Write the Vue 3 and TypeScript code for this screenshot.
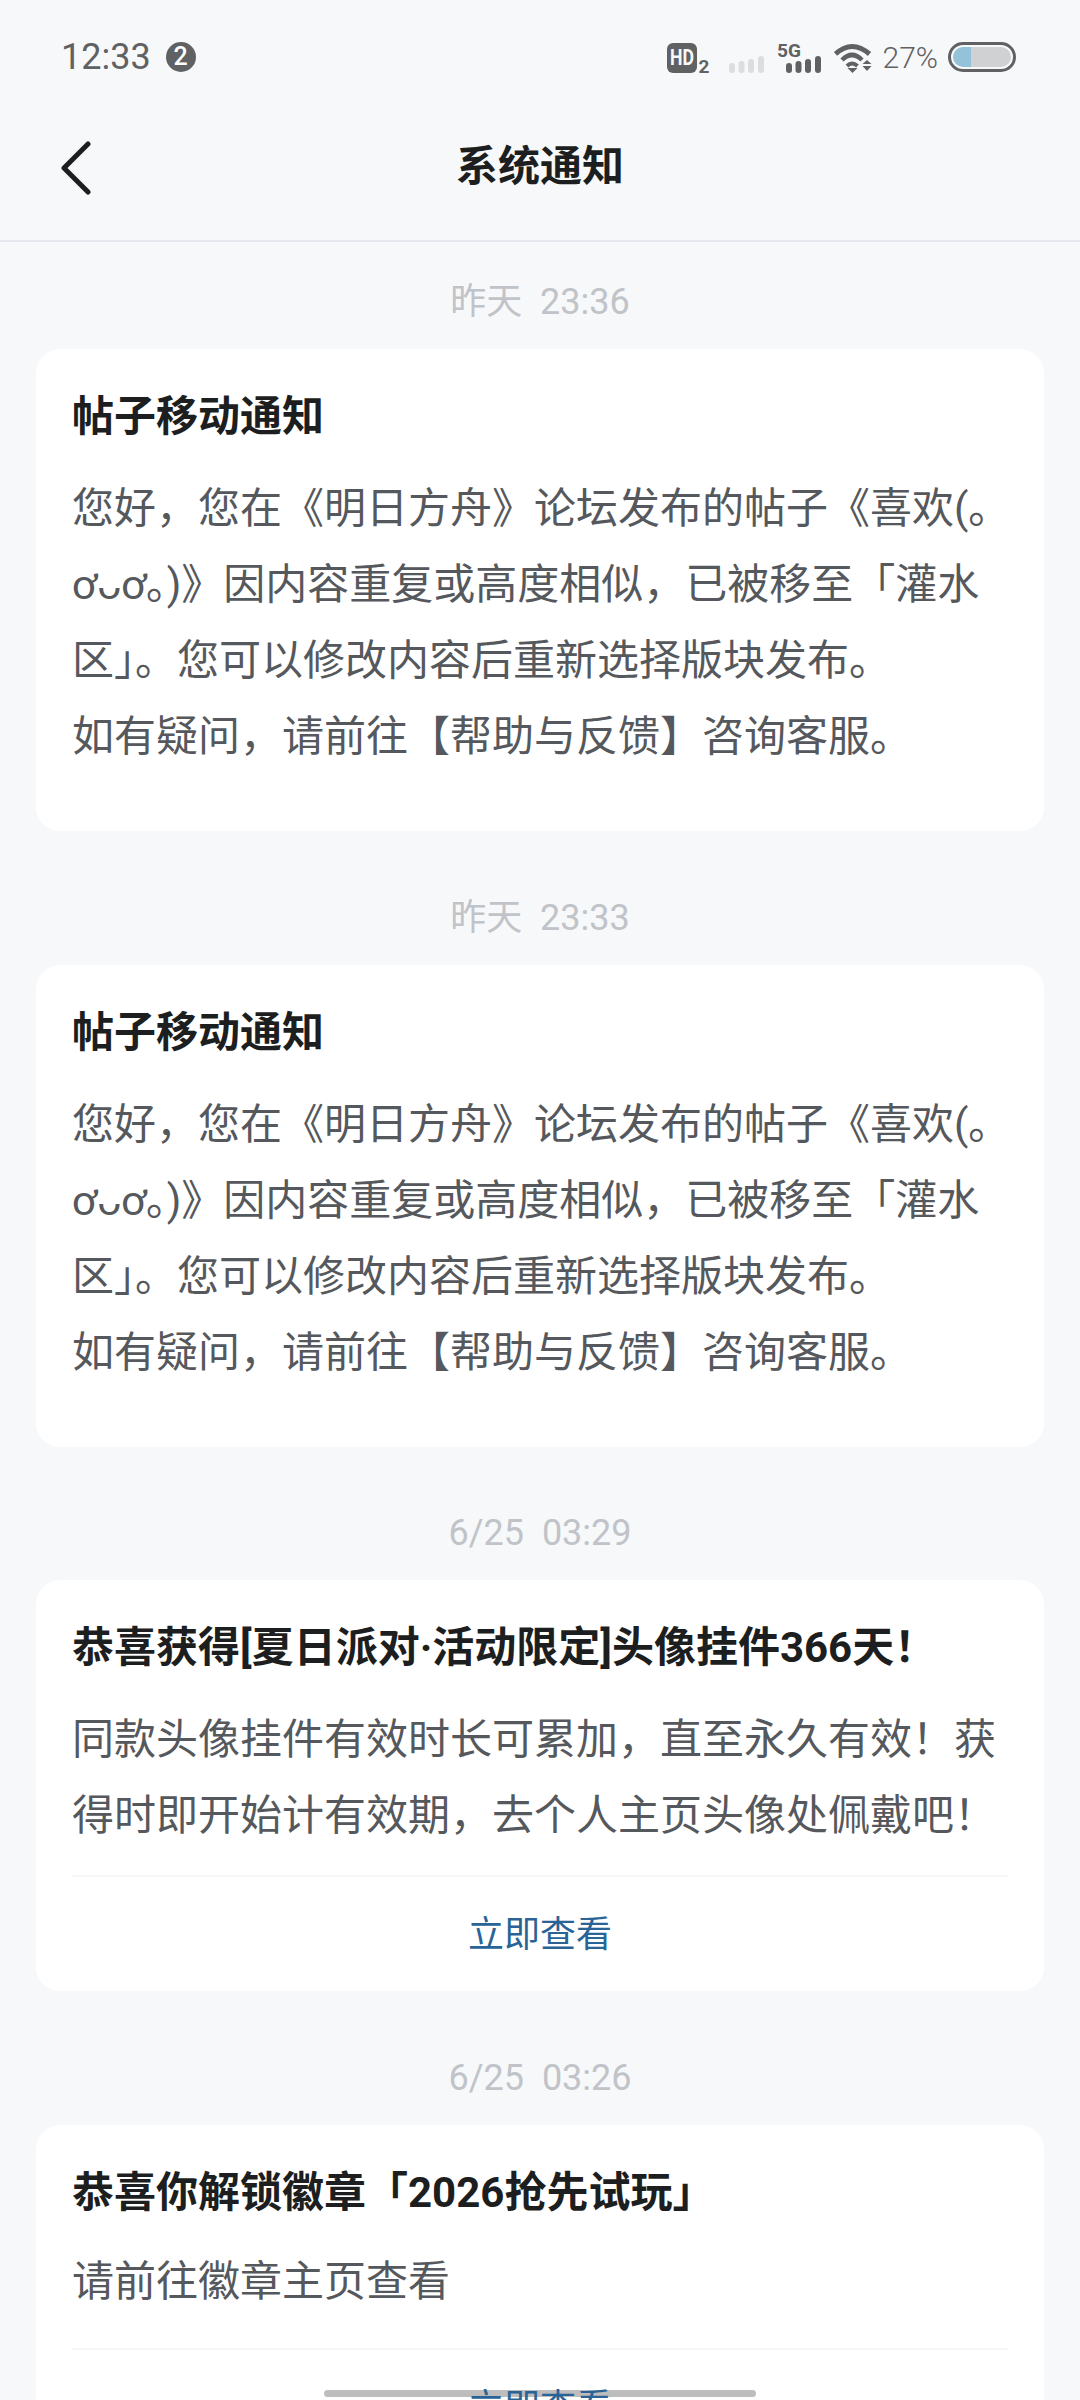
<template>
  <div class="page">
    <div class="status-bar">
      <div class="status-left">
        <span class="clock">12:33</span>
        <span class="badge">2</span>
      </div>
      <div class="status-right">
        <svg class="hd" width="42" height="44" viewBox="0 0 42 44">
          <rect x="0" y="8" width="30" height="30" rx="6" fill="#5f6163" />
          <text x="15" y="30" text-anchor="middle" textLength="24" lengthAdjust="spacingAndGlyphs" class="hd-text">HD</text>
          <text x="37" y="38" text-anchor="middle" class="hd-sub">2</text>
        </svg>
        <svg class="bars" width="35" height="44" viewBox="0 0 35 44">
          <rect x="0" y="28" width="6" height="10" rx="3" fill="#dcdddf" />
          <rect x="9.500" y="26" width="6" height="12" rx="3" fill="#dcdddf" />
          <rect x="19" y="24" width="6" height="14" rx="3" fill="#dcdddf" />
          <rect x="29" y="21" width="6" height="17" rx="3" fill="#dcdddf" />
        </svg>
        <svg class="net" width="44" height="44" viewBox="0 0 44 44">
          <text x="0" y="22" textLength="24" lengthAdjust="spacingAndGlyphs" class="net-text">5G</text>
          <rect x="9" y="28" width="6" height="10" rx="3" fill="#5f6163" />
          <rect x="18.500" y="26" width="6" height="12" rx="3" fill="#5f6163" />
          <rect x="28" y="24" width="6" height="14" rx="3" fill="#5f6163" />
          <rect x="38" y="21" width="6" height="17" rx="3" fill="#5f6163" />
        </svg>
        <svg class="wifi" width="38" height="44" viewBox="0 0 38 44">
          <path d="M1.500 19 Q18 4 35.500 19" fill="none" stroke="#5f6163" stroke-width="5" />
          <path d="M8 25 Q18 15 28 25" fill="none" stroke="#5f6163" stroke-width="4.500" />
          <path d="M13 31 Q18 26 23.500 31" fill="none" stroke="#5f6163" stroke-width="4" />
          <path d="M13.500 33 H23.500 L18.500 38 Z" fill="#5f6163" />
          <path d="M28.500 29 L33 25 L37.500 29 Z" fill="#5f6163" />
          <path d="M28.500 31 H37.500 L33 36 Z" fill="#5f6163" />
        </svg>
        <span class="level">27%</span>
        <div class="battery">
          <div class="battery-fill"></div>
        </div>
      </div>
    </div>

    <div class="nav-bar">
      <svg class="back" width="30" height="56" viewBox="0 0 30 56">
        <path d="M27 4 L3 28 L27 52" fill="none" stroke="#1d1e20" stroke-width="5" stroke-linecap="round" stroke-linejoin="round" />
      </svg>
      <h1 class="nav-title">系统通知</h1>
    </div>

    <div class="list">
      <section v-for="item in notices" :key="item.time" class="notice">
        <div class="notice-time">{{ item.time }}</div>
        <div class="card">
          <div class="card-body" :class="{ 'with-action': item.action }">
            <div class="card-title">{{ item.title }}</div>
            <p class="card-text">{{ item.text }}<span v-if="item.face" class="face">{{ item.face }}</span>{{ item.rest }}</p>
          </div>
          <div v-if="item.action" class="card-action"><span>{{ item.action }}</span></div>
        </div>
      </section>
    </div>

    <div class="home-bar"></div>
  </div>
</template>

<script setup lang="ts">
interface Notice {
  time: string
  title: string
  text: string
  face?: string
  rest?: string
  action?: string
}

// the post title holds a kaomoji, set in its own font
const moved = {
  title: '帖子移动通知',
  text: '您好，您在《明日方舟》论坛发布的帖子《喜欢(',
  face: '｡ơᴗơ｡',
  rest: ')》因内容重复或高度相似，已被移至「灌水区」。您可以修改内容后重新选择版块发布。\n如有疑问，请前往【帮助与反馈】咨询客服。'
}

const notices: Notice[] = [
  { time: '昨天  23:36', ...moved },
  { time: '昨天  23:33', ...moved },
  {
    time: '6/25  03:29',
    title: '恭喜获得[夏日派对·活动限定]头像挂件366天！',
    text: '同款头像挂件有效时长可累加，直至永久有效！获得时即开始计有效期，去个人主页头像处佩戴吧！',
    action: '立即查看'
  },
  {
    time: '6/25  03:26',
    title: '恭喜你解锁徽章「2026抢先试玩」',
    text: '请前往徽章主页查看',
    action: '立即查看'
  }
]
</script>

<style>
html,
body {
  margin: 0;
  background: #f7f8fa;
}
</style>

<style scoped>
.page {
  position: relative;
  width: 1080px;
  height: 2400px;
  overflow: hidden;
  background: #f7f8fa;
  font-family: Roboto, "Noto Sans CJK SC", sans-serif;
}

.status-bar {
  height: 90px;
  box-sizing: border-box;
  padding: 24px 64px 0 61px;
  display: flex;
  justify-content: space-between;
  align-items: center;
}

.status-left {
  display: flex;
  align-items: center;
  gap: 15px;
}

.clock {
  font-size: 36px;
  color: #5f6163;
}

.badge {
  width: 30px;
  height: 30px;
  border-radius: 50%;
  background: #5f6163;
  color: #fff;
  font-size: 25px;
  font-weight: 500;
  line-height: 30px;
  text-align: center;
}

.status-right {
  display: flex;
  align-items: center;
}

.hd-text {
  font: 700 22px Roboto, sans-serif;
  fill: #f7f8fa;
}

.hd-sub {
  font: 700 19px Roboto, sans-serif;
  fill: #5f6163;
}

.net-text {
  font: 700 19px Roboto, sans-serif;
  fill: #5f6163;
}

.bars {
  margin-left: 20px;
}

.net,
.wifi {
  margin-left: 13px;
}

.level {
  margin-left: 11px;
  font-size: 30px;
  font-weight: 300;
  color: #5f6163;
}

.battery {
  margin-left: 10px;
  width: 68px;
  height: 30px;
  box-sizing: border-box;
  border: 3px solid #5f6163;
  border-radius: 15px;
  padding: 2px;
  background: #f7f8fa;
}

.battery-fill {
  height: 100%;
  border-radius: 11px;
  background: linear-gradient(to right, #94c3d9 18px, #d0d1d3 18px);
}

.nav-bar {
  height: 152px;
  box-sizing: border-box;
  padding-bottom: 5px;
  border-bottom: 2px solid #e6e7ec;
  position: relative;
  display: flex;
  align-items: center;
  justify-content: center;
}

.back {
  position: absolute;
  left: 61px;
  top: 50px;
}

.nav-title {
  margin: 0;
  font-size: 42px;
  font-weight: 700;
  color: #1d1e20;
}

.list {
  padding: 13px 36px 0;
}

.notice-time {
  height: 94px;
  line-height: 48px;
  display: flex;
  align-items: center;
  justify-content: center;
  font-size: 36px;
  color: #c0c3c8;
  white-space: pre;
}

.card {
  background: #fff;
  border-radius: 24px;
  margin-bottom: 39.5px;
}

.card-body {
  padding: 38px 36px 56px;
}

.card-body.with-action {
  box-sizing: border-box;
  min-height: 223px;
  padding-bottom: 21px;
}

.card-title {
  font-size: 42px;
  font-weight: 700;
  line-height: 60px;
  color: #1d1e20;
}

.card-text {
  margin: 24px 0 0;
  font-size: 42px;
  line-height: 76px;
  color: #55585c;
  white-space: pre-line;
}

.notice:last-child .card-text {
  margin-top: 21px;
}

.face {
  font-family: Lato, "Noto Sans CJK SC", sans-serif;
  line-height: 1;
  letter-spacing: -0.6px;
}

.card-action {
  margin: 0 36px;
  height: 116px;
  box-sizing: border-box;
  padding-bottom: 6px;
  border-top: 2px solid #f6f6f7;
  display: flex;
  align-items: center;
  justify-content: center;
  font-size: 36px;
  color: #2a6496;
}

/* the link text stays above the gesture bar */
.card-action span {
  position: relative;
  z-index: 2;
}

.home-bar {
  position: absolute;
  z-index: 1;
  left: 324px;
  top: 2390px;
  width: 432px;
  height: 7px;
  border-radius: 4px;
  background: #bdbdbd;
}
</style>
